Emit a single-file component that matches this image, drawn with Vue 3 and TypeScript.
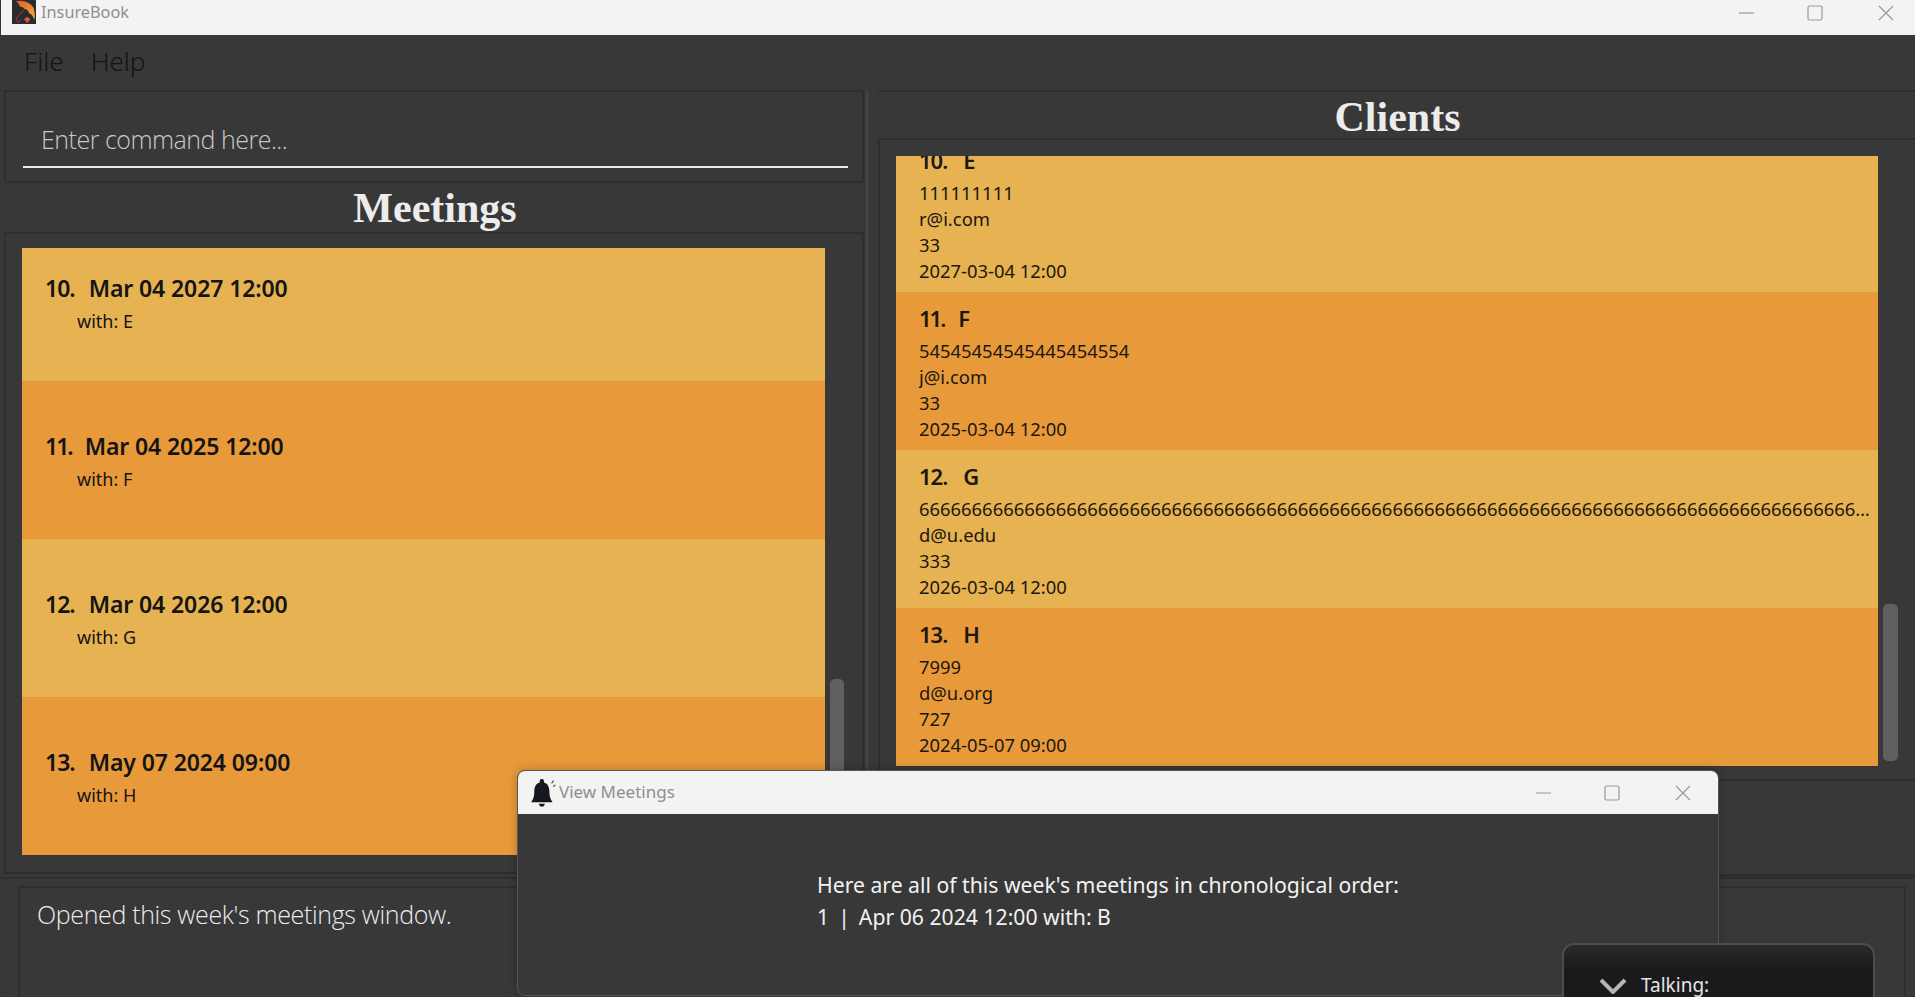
<script setup lang="ts">
interface Meeting { idx: string; when: string; who: string; h: number }
interface Client { idx: string; name: string; lines: string[]; h: number; clip?: boolean }

const meetings: Meeting[] = [
  { idx: '10.', when: 'Mar 04 2027 12:00', who: 'with: E', h: 133 },
  { idx: '11.', when: 'Mar 04 2025 12:00', who: 'with: F', h: 158 },
  { idx: '12.', when: 'Mar 04 2026 12:00', who: 'with: G', h: 158 },
  { idx: '13.', when: 'May 07 2024 09:00', who: 'with: H', h: 158 },
]
const clients: Client[] = [
  { idx: '10.', name: 'E', lines: ['111111111', 'r@i.com', '33', '2027-03-04 12:00'], h: 136, clip: true },
  { idx: '11.', name: 'F', lines: ['54545454545445454554', 'j@i.com', '33', '2025-03-04 12:00'], h: 158 },
  { idx: '12.', name: 'G', lines: ['6'.repeat(120), 'd@u.edu', '333', '2026-03-04 12:00'], h: 158 },
  { idx: '13.', name: 'H', lines: ['7999', 'd@u.org', '727', '2024-05-07 09:00'], h: 158 },
]
</script>

<template>
  <div class="app">
    <header class="titlebar">
      <svg class="logo" viewBox="0 0 24 24">
        <defs>
          <linearGradient id="canopy" x1="0.1" y1="0" x2="0.8" y2="1">
            <stop offset="0" stop-color="#e2602a" />
            <stop offset="1" stop-color="#f9a63c" />
          </linearGradient>
        </defs>
        <rect width="24" height="24" fill="#2a2b30" />
        <path d="M4 1.500C10 -0.500 19 2 22 9C23 13 23 17 22.300 20C21 16 19.500 13.500 17 13.200C16.500 10.500 14.500 8.800 12.500 9C12 7.200 9.500 6.200 8 6.800C7.500 4.500 6 2.500 4 1.500Z" fill="url(#canopy)" />
        <path d="M12.500 9L4.500 18C3.500 20 4.500 22 6 21.800C7.500 21.500 8.500 20.500 8.600 19.500" fill="none" stroke="#a83c24" stroke-width="1" />
        <path d="M12.500 19.500H18M15.250 17V22.500" stroke="#e8622c" stroke-width="2" fill="none" />
      </svg>
      <span class="title">InsureBook</span>
      <div class="winctl">
        <svg viewBox="0 0 16 16" class="ctl"><path d="M0 8H15" /></svg>
        <svg viewBox="0 0 16 16" class="ctl"><rect x="1" y="1" width="14" height="14" rx="1.5" /></svg>
        <svg viewBox="0 0 16 16" class="ctl close"><path d="M1 1L15 15M15 1L1 15" /></svg>
      </div>
    </header>

    <nav class="menubar">
      <span>File</span>
      <span>Help</span>
    </nav>

    <main class="main">
      <section class="left">
        <div class="command">
          <div class="input">Enter command here...</div>
        </div>
        <h2 class="heading meet-head">Meetings</h2>
        <div class="panel meet-panel">
          <div class="list">
            <article
              v-for="(m, i) in meetings"
              :key="m.idx"
              class="meet-card"
              :class="[i % 2 ? 'even' : 'odd', { scrolled: i === 0 }]"
              :style="{ height: m.h + 'px' }"
            >
              <div class="meet-title"><span class="num" :class="{ narrow: m.idx === '11.' }">{{ m.idx }}</span>{{ m.when }}</div>
              <div class="meet-who">{{ m.who }}</div>
            </article>
          </div>
          <div class="track left-track"><div class="thumb left-thumb"></div></div>
        </div>
      </section>

      <div class="split"></div>

      <section class="right">
        <h2 class="heading client-head">Clients</h2>
        <div class="panel client-panel">
          <div class="list">
            <article
              v-for="(c, i) in clients"
              :key="c.idx"
              class="client-card"
              :class="[i % 2 ? 'even' : 'odd', { clipped: c.clip }]"
              :style="{ height: c.h + 'px' }"
            >
              <div class="client-title"><span class="num cnum" :class="{ narrow: c.idx === '11.' }">{{ c.idx }}</span>{{ c.name }}</div>
              <div v-for="l in c.lines" :key="l" class="client-line">{{ l }}</div>
            </article>
          </div>
          <div class="track right-track"><div class="thumb right-thumb"></div></div>
        </div>
        <div class="client-foot"></div>
      </section>
    </main>

    <footer class="result">
      <div class="result-box">Opened this week's meetings window.</div>
    </footer>

    <div class="popup">
      <div class="popup-bar">
        <svg class="bell" viewBox="0 0 24 26">
          <path d="M10 0a2 2 0 0 1 2 2v1.200c3.500 1 5 4 5 8.500 0 4.800 1 7.300 3 9.800H0c2-2.500 3-5 3-9.800 0-4.500 1.500-7.500 5-8.500V2a2 2 0 0 1 2-2Z" fill="#15181c" />
          <path d="M7 23h6l-1.500 2.500h-3Z" fill="#15181c" />
          <path d="M19 4l2-2.500M20.500 7l2-1.500" fill="none" stroke="#555" stroke-width="1.200" />
        </svg>
        <span class="popup-title">View Meetings</span>
        <div class="winctl popup-ctl">
          <svg viewBox="0 0 16 16" class="ctl"><path d="M0 8H15" /></svg>
          <svg viewBox="0 0 16 16" class="ctl"><rect x="1" y="1" width="14" height="14" rx="1.5" /></svg>
          <svg viewBox="0 0 16 16" class="ctl close"><path d="M1 1L15 15M15 1L1 15" /></svg>
        </div>
      </div>
      <div class="popup-body">
        <p>Here are all of this week's meetings in chronological order:</p>
        <p><span class="tight">1&nbsp; |&nbsp; </span>Apr 06 2024 12:00 with: B</p>
      </div>
    </div>

    <div class="talking">
      <svg viewBox="0 0 28 16" class="chev"><path d="M2 2L14 14L26 2" /></svg>
      <span>Talking:</span>
    </div>
  </div>
</template>

<style>
html, body { margin: 0; height: 100%; overflow: hidden; background: #383838; }
</style>

<style scoped>
.app {
  position: relative;
  width: 1915px;
  height: 997px;
  overflow: hidden;
  display: flex;
  flex-direction: column;
  background: #383838;
  font-family: "Noto Sans", "Open Sans", sans-serif;
  border-left: 1px solid #2f3a3c;
  box-sizing: border-box;
}
.titlebar {
  flex: 0 0 35px;
  background: #f3f3f3;
  display: flex;
  align-items: flex-start;
  margin-left: -1px;
  border-left: 1px solid #fff;
  padding-left: 11px;
}
.logo { width: 24px; height: 24px; }
.title { margin-left: 5px; font-size: 16.300px; line-height: 25px; color: #8f8f8f; }
.winctl { margin-left: auto; display: flex; gap: 52px; padding: 5px 21px 0 0; }
.ctl { width: 16px; height: 16px; fill: none; stroke: #999; stroke-width: 1.2; }
.ctl.close { margin-left: 3px; }
.menubar {
  flex: 0 0 55px;
  box-sizing: border-box;
  display: flex;
  gap: 27px;
  padding: 9px 0 0 23px;
  font-size: 26px;
  line-height: 34px;
  font-weight: 300;
  color: #141414;
}
.main { flex: 0 0 787px; display: flex; }
.left { width: 860px; margin-left: 3px; display: flex; flex-direction: column; }
.split { width: 12px; border-left: 2px solid #464646; box-sizing: border-box; margin-left: 2px; }
.right { flex: 1; display: flex; flex-direction: column; min-width: 0; }
.command {
  flex: 0 0 93px;
  box-sizing: border-box;
  border: 2px solid #2e2e2e;
  padding: 0 14px 13px 17px;
  display: flex;
  align-items: flex-end;
}
.input {
  flex: 1;
  border-bottom: 2px solid #ececec;
  font-size: 25px;
  letter-spacing: -0.500px;
  line-height: 38px;
  font-weight: 300;
  color: #c9c9c9;
  padding: 0 0 8px 18px;
  font-family: "Open Sans", sans-serif;
}
.heading {
  margin: 0;
  text-align: center;
  font-family: "Liberation Serif", serif;
  font-weight: 700;
  font-size: 42px;
  color: #ececec;
  box-sizing: border-box;
}
.meet-head { flex: 0 0 49px; min-height: 0; line-height: 51px; padding-left: 2px; }
.client-head {
  flex: 0 0 50px;
  min-height: 0;
  line-height: 50px;
  padding-left: 2px;
  border-top: 2px solid #2e2e2e;
  border-bottom: 2px solid #2e2e2e;
}
.panel { display: flex; box-sizing: border-box; }
.list { display: flex; flex-direction: column; overflow: hidden; }
.meet-panel {
  height: 642px;
  border: 2px solid #2e2e2e;
  padding: 14px 0 15px 16px;
  gap: 5px;
}
.meet-panel .list { width: 803px; height: 607px; }
.client-panel {
  flex: 0 0 641px;
  border-left: 2px solid #2e2e2e;
  border-bottom: 2px solid #2e2e2e;
  padding: 16px 0 13px 16px;
  gap: 5px;
}
.client-panel .list { width: 982px; }
.client-foot { flex: 1; border-bottom: 3px solid #2e2e2e; }
.odd { background: #e6b252; }
.even { background: #e89a3b; }
.meet-card {
  flex: none;
  box-sizing: border-box;
  padding: 49px 0 0 23px;
  color: #141414;
}
.meet-card.scrolled { padding-top: 24px; }
.meet-title { font-size: 23px; line-height: 32px; font-weight: 600; letter-spacing: -0.100px; }
.meet-who { font-size: 18px; line-height: 24px; padding-left: 32px; margin-top: 5px; }
.num { display: inline-block; margin-right: 14px; letter-spacing: -1px; }
.num.narrow { margin-right: 13px; letter-spacing: -2px; }
.client-card {
  flex: none;
  box-sizing: border-box;
  padding: 11px 3px 0 23px;
  color: #1c1710;
}
.client-card.clipped { padding-top: 0; }
.client-card.clipped .client-title { margin-top: -11px; }
.client-title { font-size: 22px; line-height: 30px; font-weight: 600; margin-bottom: 5px; }
.cnum { margin-right: 16px; }
.cnum.narrow { margin-right: 14px; }
.client-line {
  font-size: 18.400px;
  line-height: 26px;
  white-space: nowrap;
  overflow: hidden;
  text-overflow: ellipsis;
}
.track { position: relative; width: 15px; }
.thumb { position: absolute; left: 0; width: 15px; background: #606060; border-radius: 5px; }
.left-thumb { top: 431px; height: 200px; width: 14px; }
.right-thumb { top: 448px; height: 157px; }
.result { flex: 1; border-top: 2px solid #2e2e2e; padding: 7px 9px 0 17px; display: flex; }
.result-box {
  flex: 1;
  border: 2px solid #2e2e2e;
  border-bottom: 0;
  padding: 8px 0 0 17px;
  font-size: 25px;
  letter-spacing: -0.350px;
  line-height: 36px;
  font-weight: 300;
  color: #ececec;
  font-family: "Open Sans", sans-serif;
}
.popup {
  position: absolute;
  left: 516px;
  top: 770px;
  width: 1202px;
  height: 226px;
  box-sizing: border-box;
  border: 1px solid #555;
  border-radius: 8px;
  overflow: hidden;
  background: #383838;
  box-shadow: 0 0 10px rgba(0, 0, 0, 0.25);
}
.popup-bar {
  height: 43px;
  background: #f3f3f3;
  display: flex;
  align-items: center;
  padding-left: 13px;
}
.bell { width: 26px; height: 28px; }
.popup-title { margin-left: 2px; padding-bottom: 2px; font-size: 17px; color: #8f8f8f; }
.popup-ctl { padding: 0 27px 0 0; align-items: center; }
.popup-body { padding: 55px 0 0 299px; color: #f2f2f2; font-size: 21.200px; line-height: 32px; }
.popup-body p { margin: 0; }
.popup-body .tight { word-spacing: -1px; }
.talking {
  position: absolute;
  left: 1561px;
  top: 943px;
  width: 313px;
  height: 70px;
  box-sizing: border-box;
  border: 2px solid #4c4c4c;
  border-radius: 12px;
  background: linear-gradient(#2a2a2a, #1a1a1c 40%);
  display: flex;
  align-items: flex-start;
  padding: 27px 0 0 35px;
  gap: 14px;
  color: #e4e4e4;
  font-size: 19px;
  line-height: 26px;
}
.chev { width: 28px; height: 16px; margin-top: 6px; fill: none; stroke: #b5b5b5; stroke-width: 4; }
</style>
